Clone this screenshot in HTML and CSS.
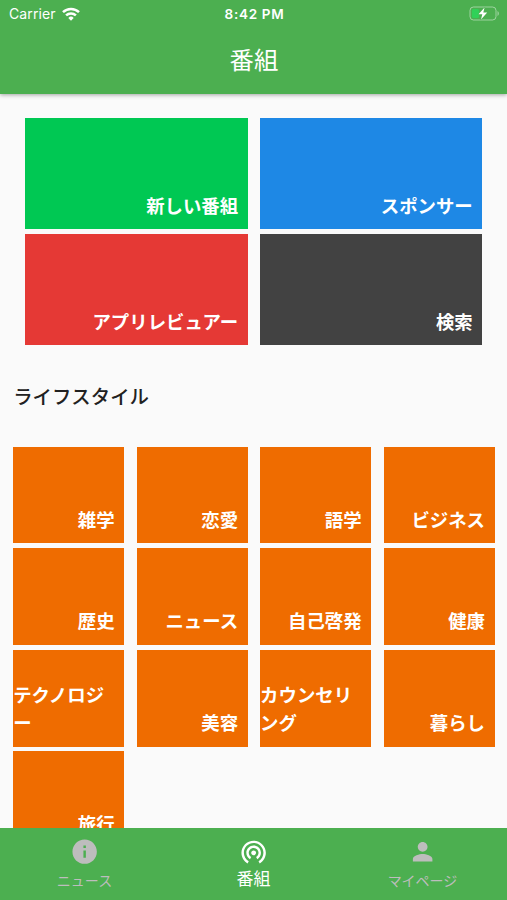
FILE: index.html
```html
<!DOCTYPE html>
<html lang="ja">
<head>
    <meta charset="UTF-8">
    <meta name="viewport" content="width=device-width, initial-scale=1.0">
    <title>番組</title>
    <link rel="stylesheet" href="styles.css">
</head>
<body>
    <div class="app">
        <header class="header">
            <div class="status-bar">
                <div class="carrier">
                    <span>Carrier</span>
                    <svg class="wifi" viewBox="0 0 18 14" fill="none" stroke="#fff" stroke-width="2.5">
                        <path d="M1 5.2a11.4 11.4 0 0 1 16 0"/>
                        <path d="M4.1 8.4a7 7 0 0 1 9.8 0"/>
                        <path d="M9 13.8l-2.7-2.9a3.8 3.8 0 0 1 5.4 0z" fill="#fff" stroke="none"/>
                    </svg>
                </div>
                <span class="time">8:42 PM</span>
                <svg class="battery" viewBox="0 0 31 15">
                    <rect x="1" y="1" width="26" height="13" rx="3.5" fill="none" stroke="#fff" stroke-opacity=".45"/>
                    <rect x="3" y="3" width="7" height="9" rx="1.5" fill="#30d158"/>
                    <path d="M28.5 5v5c1.8-.8 1.8-4.2 0-5z" fill="#fff" fill-opacity=".45"/>
                    <path d="M15.6 1.5L9.5 8.3h3.8L12 13.5l6.2-6.9h-3.9z" fill="#fff" stroke="#4caf50" stroke-width=".8" paint-order="stroke"/>
                </svg>
            </div>
            <h1>番組</h1>
        </header>

        <main class="content">
            <div class="menu-grid">
                <a class="tile green"><span>新しい番組</span></a>
                <a class="tile blue"><span>スポンサー</span></a>
                <a class="tile red"><span>アプリレビュアー</span></a>
                <a class="tile dark"><span>検索</span></a>
            </div>

            <h2>ライフスタイル</h2>

            <div class="category-grid">
                <a class="tile"><span>雑学</span></a>
                <a class="tile"><span>恋愛</span></a>
                <a class="tile"><span>語学</span></a>
                <a class="tile"><span>ビジネス</span></a>
                <a class="tile"><span>歴史</span></a>
                <a class="tile"><span>ニュース</span></a>
                <a class="tile"><span>自己啓発</span></a>
                <a class="tile"><span>健康</span></a>
                <a class="tile wrap"><span>テクノロジー</span></a>
                <a class="tile"><span>美容</span></a>
                <a class="tile wrap"><span>カウンセリング</span></a>
                <a class="tile"><span>暮らし</span></a>
                <a class="tile"><span>旅行</span></a>
            </div>
        </main>

        <nav class="tab-bar">
            <a class="tab">
                <svg viewBox="0 0 24 24"><path d="M12 2C6.48 2 2 6.48 2 12s4.48 10 10 10 10-4.48 10-10S17.52 2 12 2zm1 15h-2v-6h2v6zm0-8h-2V7h2v2z"/></svg>
                <span>ニュース</span>
            </a>
            <a class="tab active">
                <svg viewBox="0 0 24 24"><path d="M12 11c-1.1 0-2 .9-2 2s.9 2 2 2 2-.9 2-2-.9-2-2-2zm6 2c0-3.31-2.69-6-6-6s-6 2.69-6 6c0 2.22 1.21 4.15 3 5.19l1-1.74c-1.19-.7-2-1.97-2-3.45 0-2.21 1.79-4 4-4s4 1.79 4 4c0 1.48-.81 2.75-2 3.45l1 1.74c1.79-1.04 3-2.97 3-5.19zM12 3C6.48 3 2 7.48 2 13c0 3.7 2.01 6.92 4.99 8.65l1-1.73C5.61 18.53 4 15.96 4 13c0-4.42 3.58-8 8-8s8 3.58 8 8c0 2.96-1.61 5.53-4 6.92l1 1.73c2.99-1.73 5-4.95 5-8.65 0-5.52-4.48-10-10-10z"/></svg>
                <span>番組</span>
            </a>
            <a class="tab">
                <svg viewBox="0 0 24 24"><path d="M12 12c2.21 0 4-1.79 4-4s-1.79-4-4-4-4 1.79-4 4 1.79 4 4 4zm0 2c-2.67 0-8 1.34-8 4v2h16v-2c0-2.66-5.33-4-8-4z"/></svg>
                <span>マイページ</span>
            </a>
        </nav>
    </div>
</body>
</html>
```
FILE: styles.css
```css
* {
    margin: 0;
    padding: 0;
    box-sizing: border-box;
}

body {
    font-family: Inter, 'Noto Sans CJK JP', sans-serif;
    background: #fafafa;
    color: #212121;
}

.app {
    display: flex;
    flex-direction: column;
    height: 100vh;
    overflow: hidden;
}

.header {
    flex: none;
    height: 93.5px;
    background: #4caf50;
    color: white;
    box-shadow: 0 1px 4px rgba(0,0,0,0.35);
    z-index: 1;
}

.status-bar {
    display: grid;
    grid-template-columns: 1fr auto 1fr;
    align-items: center;
    height: 27px;
    padding: 0 7px 0 9px;
    font-size: 14px;
}

.carrier {
    display: flex;
    align-items: center;
    gap: 6px;
    letter-spacing: 0.1px;
}

.wifi {
    width: 18px;
    height: 14px;
}

.time {
    font-size: 13.5px;
    font-weight: 600;
    letter-spacing: 0.7px;
}

.battery {
    width: 31px;
    height: 15px;
    justify-self: end;
}

h1 {
    font-size: 24.4px;
    font-weight: 400;
    line-height: 66px;
    padding-left: 1px;
    text-align: center;
}

.content {
    flex: 1;
    min-height: 0;
    overflow: hidden;
    padding: 24.7px 12.3px 0 13.2px;
}

.menu-grid {
    display: grid;
    grid-template-columns: 1fr 1fr;
    grid-auto-rows: 111px;
    gap: 5px 12.3px;
    padding: 0 12.3px;
}

.category-grid {
    display: grid;
    grid-template-columns: repeat(4, 1fr);
    grid-auto-rows: 96.7px;
    gap: 4.9px 12.3px;
}

h2 {
    margin: 37px 0 34.5px;
    font-size: 19.4px;
    font-weight: 500;
    line-height: 30px;
}

.tile {
    display: flex;
    align-items: flex-end;
    justify-content: flex-end;
    padding: 0 9.7px 9.7px;
    background: #ef6c00;
    color: white;
    font-size: 18.4px;
    font-weight: 700;
    line-height: 28px;
    white-space: nowrap;
}

.tile.wrap {
    padding-left: 0;
    justify-content: flex-start;
    white-space: normal;
    line-break: anywhere;
}

.green {
    background: #00c853;
}

.blue {
    background: #1e88e5;
}

.red {
    background: #e53935;
}

.dark {
    background: #424242;
}

.tab-bar {
    flex: none;
    display: grid;
    grid-template-columns: repeat(3, 1fr);
    height: 72px;
    background: #4caf50;
}

.tab {
    display: flex;
    flex-direction: column;
    align-items: center;
    padding-top: 8.5px;
    color: #bdbdbd;
    font-size: 14px;
    line-height: 30px;
}

.tab svg {
    width: 29.3px;
    height: 29.3px;
    fill: currentColor;
}

.tab.active {
    color: white;
    font-size: 17px;
    line-height: 27px;
}
```
